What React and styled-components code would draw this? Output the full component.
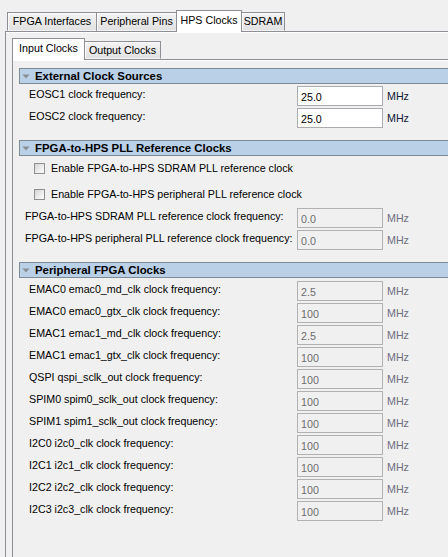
import React from "react";
import styled, { createGlobalStyle } from "styled-components";

const Global = createGlobalStyle`
  html, body, #root { height: 100%; }
  body {
    margin: 0;
    background: #f0f0f0;
    overflow: hidden;
    font-family: "Liberation Sans", Arial, sans-serif;
    font-size: 10.7px;
    color: #000;
  }
`;

const Frame = styled.div`
  box-sizing: border-box;
  width: 560px;
  height: 100%;
  padding: 10px 0 0 5px;
  display: flex;
  flex-direction: column;
`;

const TabStrip = styled.div`
  display: flex;
  align-items: flex-end;
  height: 21px;
  padding-left: ${(p) => (p.$inner ? 0 : 2)}px;
  position: relative;
  z-index: 1;
`;

const Tab = styled.div`
  box-sizing: border-box;
  width: ${(p) => p.$w}px;
  height: ${(p) => (p.$active ? 22 : p.$inner ? 18 : 19)}px;
  margin-bottom: ${(p) => (p.$active ? -1 : 0)}px;
  margin-left: -1px;
  display: flex;
  align-items: center;
  justify-content: center;
  padding-bottom: ${(p) => (p.$active ? 3 : 1)}px;
  border: 1px solid #8d8f94;
  border-bottom: ${(p) => (p.$active ? "none" : "1px solid transparent")};
  background: ${(p) =>
    p.$active ? "#ffffff" : "linear-gradient(#f3f3f3, #e2e2e2)"};
  box-shadow: ${(p) => (p.$active ? "none" : "inset 1px 1px 0 #fbfbfb")};
  white-space: nowrap;
  color: #000;
  position: relative;
  z-index: ${(p) => (p.$active ? 2 : 1)};
  &:first-child { margin-left: 0; }
`;

const Panel = styled.div`
  flex: 1;
  display: flex;
  flex-direction: column;
  border-top: 1px solid #8d8f94;
  border-left: 1px solid #8d8f94;
  box-shadow: inset 0 1px 0 #ffffff;
  padding: ${(p) => (p.$inner ? "8px 0 0 6px" : "6px 0 0 6px")};
  gap: ${(p) => (p.$inner ? 12 : 0)}px;
`;

const Section = styled.section`
  display: flex;
  flex-direction: column;
`;

const Header = styled.div`
  box-sizing: border-box;
  height: 16px;
  border: 1px solid #7f8b97;
  background: #b9d0e7;
  display: flex;
  align-items: center;
  gap: 4px;
  padding-left: 2px;
  font-weight: bold;
  font-size: 11.4px;
  color: #000;
`;

const Body = styled.div`
  display: flex;
  flex-direction: column;
  gap: 2px;
  padding-top: ${(p) => p.$top ?? 2}px;
`;

const Row = styled.div`
  display: grid;
  grid-template-columns: 278px 86px auto;
  height: 20px;
`;

const Label = styled.span`
  padding-left: ${(p) => p.$indent}px;
  line-height: 16px;
  white-space: nowrap;
`;

const Field = styled.input`
  box-sizing: border-box;
  width: 86px;
  height: 20px;
  margin: 0;
  padding: 1px 3px 0;
  border: 1px solid ${(p) => (p.disabled ? "#b1b1b1" : "#a9abb0")};
  background: ${(p) => (p.disabled ? "#f0f0f0" : "#ffffff")};
  color: ${(p) => (p.disabled ? "#6d6d6d" : "#000")};
  -webkit-text-fill-color: ${(p) => (p.disabled ? "#6d6d6d" : "#000")};
  font-family: "Liberation Sans", Arial, sans-serif;
  font-size: 10.7px;
  outline: none;
`;

const Unit = styled.span`
  padding-left: 4px;
  line-height: 21px;
  color: ${(p) => (p.$disabled ? "#6e6e80" : "#101838")};
`;

const CheckRow = styled.label`
  display: flex;
  align-items: center;
  gap: 6px;
  height: 24px;
  padding-left: 15px;
  &:first-child { margin-top: -2px; }
`;

const Box = styled.span`
  box-sizing: border-box;
  width: 11px;
  height: 11px;
  border: 1px solid #8e8f8f;
  background: linear-gradient(135deg, #d4d4d4 0%, #eeeeee 60%, #fbfbfb 100%);
  margin-top: 1px;
`;

const Caret = () => (
  <svg width="9" height="5" viewBox="0 0 9 5" aria-hidden="true">
    <path d="M0.5 0.5 H7.5 L4 4.5 Z" fill="#8a8e93" />
  </svg>
);

const FieldRow = ({ label, value, disabled, indent = 10 }) => (
  <Row>
    <Label $indent={indent}>{label}</Label>
    <Field value={value} disabled={disabled} readOnly />
    <Unit $disabled={disabled}>MHz</Unit>
  </Row>
);

const peripheral = [
  ["EMAC0 emac0_md_clk clock frequency:", "2.5"],
  ["EMAC0 emac0_gtx_clk clock frequency:", "100"],
  ["EMAC1 emac1_md_clk clock frequency:", "2.5"],
  ["EMAC1 emac1_gtx_clk clock frequency:", "100"],
  ["QSPI qspi_sclk_out clock frequency:", "100"],
  ["SPIM0 spim0_sclk_out clock frequency:", "100"],
  ["SPIM1 spim1_sclk_out clock frequency:", "100"],
  ["I2C0 i2c0_clk clock frequency:", "100"],
  ["I2C1 i2c1_clk clock frequency:", "100"],
  ["I2C2 i2c2_clk clock frequency:", "100"],
  ["I2C3 i2c3_clk clock frequency:", "100"],
];

export default function App() {
  return (
    <>
      <Global />
      <Frame>
        <TabStrip>
          <Tab $w={90}>FPGA Interfaces</Tab>
          <Tab $w={81}>Peripheral Pins</Tab>
          <Tab $w={66} $active>HPS Clocks</Tab>
          <Tab $w={44}>SDRAM</Tab>
        </TabStrip>
        <Panel>
          <TabStrip $inner>
            <Tab $w={73} $active $inner>Input Clocks</Tab>
            <Tab $w={77} $inner>Output Clocks</Tab>
          </TabStrip>
          <Panel $inner>
            <Section>
              <Header><Caret />External Clock Sources</Header>
              <Body>
                <FieldRow label="EOSC1 clock frequency:" value="25.0" />
                <FieldRow label="EOSC2 clock frequency:" value="25.0" />
              </Body>
            </Section>
            <Section>
              <Header><Caret />FPGA-to-HPS PLL Reference Clocks</Header>
              <Body>
                <CheckRow><Box />Enable FPGA-to-HPS SDRAM PLL reference clock</CheckRow>
                <CheckRow><Box />Enable FPGA-to-HPS peripheral PLL reference clock</CheckRow>
                <FieldRow indent={6} disabled label="FPGA-to-HPS SDRAM PLL reference clock frequency:" value="0.0" />
                <FieldRow indent={6} disabled label="FPGA-to-HPS peripheral PLL reference clock frequency:" value="0.0" />
              </Body>
            </Section>
            <Section>
              <Header><Caret />Peripheral FPGA Clocks</Header>
              <Body $top={3}>
                {peripheral.map(([l, v]) => (
                  <FieldRow key={l} disabled label={l} value={v} />
                ))}
              </Body>
            </Section>
          </Panel>
        </Panel>
      </Frame>
    </>
  );
}
